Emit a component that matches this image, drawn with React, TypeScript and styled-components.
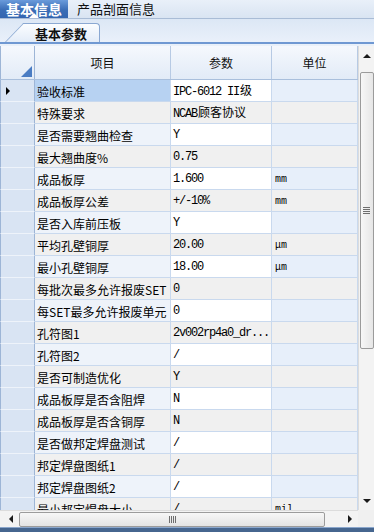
import React from "react";
import styled, { createGlobalStyle, css } from "styled-components";

const GlobalStyle = createGlobalStyle`
  html, body { margin: 0; padding: 0; background: #ffffff; }
  body { font-family: "Noto Sans CJK SC", "Liberation Sans", sans-serif; }
  * { box-sizing: border-box; }
`;

const CJK = `"Noto Sans CJK SC", "Noto Sans", sans-serif`;
const MONO = `"Liberation Mono", "Noto Sans CJK SC", monospace`;

const Frame = styled.div`
  width: 374px;
  height: 532px;
  overflow: hidden;
  display: flex;
  flex-direction: column;
  background: #e9f0f9;
  font-family: ${CJK};
`;

const TopBar = styled.div`
  height: 19px;
  flex: none;
  display: flex;
  align-items: stretch;
  background: linear-gradient(#e9f0f9, #d9e4f2);
  border-bottom: 1px solid #a9bcd6;
`;

const TopTab = styled.div<{ $active?: boolean }>`
  position: relative;
  display: flex;
  align-items: center;
  font-size: 14px;
  line-height: 18px;
  white-space: nowrap;
  ${(p) =>
    p.$active
      ? css`
          width: 68px;
          justify-content: center;
          color: #ffffff;
          font-weight: bold;
          background: linear-gradient(#6a9bdb, #3a6db6 55%, #3466b0);
          &::after {
            content: "";
            position: absolute;
            left: 29px;
            bottom: 0;
            border-left: 5px solid transparent;
            border-right: 5px solid transparent;
            border-bottom: 5px solid #ffffff;
          }
        `
      : css`
          padding-left: 9px;
          font-size: 13px;
          color: #111111;
        `}
`;

const SubBar = styled.div`
  height: 23px;
  flex: none;
  display: flex;
  align-items: flex-end;
  padding-left: 23px;
  background: linear-gradient(#dce7f5, #e9f0fa);
`;

const SubTab = styled.div`
  position: relative;
  z-index: 0;
  width: 77px;
  height: 19px;
  display: flex;
  align-items: center;
  justify-content: center;
  font-size: 13px;
  font-weight: bold;
  color: #111111;
  border-top: 1px solid #8aa8d2;
  border-right: 1px solid #8aa8d2;
  border-top-right-radius: 4px;
  background: linear-gradient(#fbfdff, #e3ecf8);
  &::before {
    content: "";
    position: absolute;
    z-index: -1;
    left: -18px;
    top: -1px;
    bottom: 0;
    width: 26px;
    border-left: 1px solid #8aa8d2;
    border-top: 1px solid #8aa8d2;
    background: linear-gradient(#fbfdff, #e3ecf8);
    transform: skewX(-44deg);
    transform-origin: bottom left;
  }
`;

const Rule = styled.div`
  height: 2px;
  flex: none;
  background: #6f98d2;
  margin-bottom: 2px;
`;

const GridMain = styled.div`
  display: flex;
  height: 464px;
  flex: none;
`;

const Viewport = styled.div`
  width: 358px;
  overflow: hidden;
  background: #ffffff;
`;

const COLS = "35px 136px 101px 86px";

const HeaderRow = styled.div`
  display: grid;
  grid-template-columns: ${COLS};
  height: 34px;
  background: linear-gradient(#f5f8fd, #e2ebf7);
  border-bottom: 1px solid #a9bfdc;
`;

const HeadCell = styled.div<{ $corner?: boolean }>`
  position: relative;
  display: flex;
  align-items: center;
  justify-content: center;
  font-size: 12px;
  color: #111111;
  border-right: 1px solid ${(p) => (p.$corner ? "#9db5d6" : "#b7cae4")};
  ${(p) =>
    p.$corner &&
    css`
      border-left: 1px solid #9db5d6;
      &::after {
        content: "";
        position: absolute;
        right: 2px;
        bottom: 2px;
        border-left: 11px solid transparent;
        border-bottom: 11px solid #4a7cc3;
      }
    `}
`;

const Row = styled.div`
  display: grid;
  grid-template-columns: ${COLS};
  height: 22px;
`;

const RowHead = styled.div<{ $current?: boolean }>`
  position: relative;
  background: #d9e4f3;
  border-left: 1px solid #9db5d6;
  border-right: 1px solid #9db5d6;
  border-bottom: 1px solid #eef3fa;
  ${(p) =>
    p.$current &&
    css`
      &::after {
        content: "";
        position: absolute;
        left: 5px;
        top: 7px;
        border-top: 4px solid transparent;
        border-bottom: 4px solid transparent;
        border-left: 4px solid #000000;
      }
    `}
`;

type Kind = "item" | "param" | "unit";

const bgFor = (kind: Kind, alt: boolean, selected: boolean) => {
  if (selected) return "#b7d2f2";
  if (alt) return "#f0f0f0";
  if (kind === "param") return "#ffffff";
  if (kind === "unit") return "#e7effa";
  return "#eef3fa";
};

const Cell = styled.div<{ $kind: Kind; $alt: boolean; $selected?: boolean }>`
  display: flex;
  align-items: center;
  padding: 1px 0 0 2px;
  overflow: hidden;
  white-space: nowrap;
  color: #000000;
  background: ${(p) => bgFor(p.$kind, p.$alt, !!p.$selected)};
  border-right: 1px solid #c9d9ee;
  border-bottom: 1px solid #c9d9ee;
  ${(p) =>
    p.$kind === "item"
      ? css`
          font-family: ${CJK};
          font-size: 12px;
        `
      : css`
          font-family: ${MONO};
          font-size: 12px;
          letter-spacing: -1.2px;
        `}
  ${(p) =>
    p.$kind === "unit" &&
    css`
      padding-left: 3px;
      font-size: 10px;
      letter-spacing: 0;
    `}
`;

const Value = styled.span`
  line-height: 16px;
`;

const Han = styled.span`
  font-family: ${CJK};
  font-size: 12px;
  letter-spacing: 0;
  margin-left: 1px;
`;

const VScroll = styled.div`
  width: 16px;
  display: flex;
  flex-direction: column;
  align-items: center;
  background: #f3f3f3;
  border-left: 1px solid #dcdcdc;
`;

const Arrow = styled.div<{ $dir: "up" | "down" | "left" | "right" }>`
  flex: none;
  width: 0;
  height: 0;
  ${(p) =>
    p.$dir === "up" &&
    css`
      margin: 8px 0 6px;
      border-left: 4px solid transparent;
      border-right: 4px solid transparent;
      border-bottom: 4px solid #1a1a1a;
    `}
  ${(p) =>
    p.$dir === "down" &&
    css`
      margin: auto 0 7px;
      border-left: 4px solid transparent;
      border-right: 4px solid transparent;
      border-top: 4px solid #1a1a1a;
    `}
  ${(p) =>
    p.$dir === "left" &&
    css`
      margin: 0 6px 0 9px;
      border-top: 4px solid transparent;
      border-bottom: 4px solid transparent;
      border-right: 4px solid #1a1a1a;
    `}
  ${(p) =>
    p.$dir === "right" &&
    css`
      margin: 0 6px 0 auto;
      border-top: 4px solid transparent;
      border-bottom: 4px solid transparent;
      border-left: 4px solid #1a1a1a;
    `}
`;

const VThumb = styled.div`
  width: 14px;
  height: 277px;
  margin-top: 8px;
  border: 1px solid #9b9b9b;
  border-radius: 2px;
  background: linear-gradient(90deg, #f7f7f7, #e6e6e6);
  display: flex;
  align-items: center;
  justify-content: center;
`;

const VGrip = styled.div`
  width: 7px;
  height: 7px;
  background: repeating-linear-gradient(#6e6e6e 0 1px, transparent 1px 2px);
`;

const HBar = styled.div`
  height: 17px;
  flex: none;
  display: flex;
`;

const HScroll = styled.div`
  width: 358px;
  display: flex;
  align-items: center;
  background: #f3f3f3;
  border-top: 1px solid #dcdcdc;
`;

const HThumb = styled.div`
  width: 306px;
  height: 15px;
  border: 1px solid #9b9b9b;
  border-radius: 2px;
  background: linear-gradient(#f7f7f7, #e3e3e3);
  display: flex;
  align-items: center;
  justify-content: center;
`;

const HGrip = styled.div`
  width: 7px;
  height: 7px;
  background: repeating-linear-gradient(90deg, #6e6e6e 0 1px, transparent 1px 2px);
`;

const Corner = styled.div`
  flex: 1;
  background: #f0f0f0;
`;

const BottomBar = styled.div`
  flex: 1;
  background: #46668f;
  border-top: 1px solid #8aa6cc;
`;

type Rec = [string, string, string];

const rows: Rec[] = [
  ["验收标准", "IPC-6012 II级", ""],
  ["特殊要求", "NCAB顾客协议", ""],
  ["是否需要翘曲检查", "Y", ""],
  ["最大翘曲度%", "0.75", ""],
  ["成品板厚", "1.600", "mm"],
  ["成品板厚公差", "+/-10%", "mm"],
  ["是否入库前压板", "Y", ""],
  ["平均孔壁铜厚", "20.00", "μm"],
  ["最小孔壁铜厚", "18.00", "μm"],
  ["每批次最多允许报废SET", "0", ""],
  ["每SET最多允许报废单元", "0", ""],
  ["孔符图1", "2v002rp4a0_dr...", ""],
  ["孔符图2", "/", ""],
  ["是否可制造优化", "Y", ""],
  ["成品板厚是否含阻焊", "N", ""],
  ["成品板厚是否含铜厚", "N", ""],
  ["是否做邦定焊盘测试", "/", ""],
  ["邦定焊盘图纸1", "/", ""],
  ["邦定焊盘图纸2", "/", ""],
  ["最小邦定焊盘大小", "/", "mil"],
];

// Split a value into runs so CJK characters keep their full width
function MixedText({ text }: { text: string }) {
  const parts = text.split(/([\u4e00-\u9fff]+)/).filter(Boolean);
  return (
    <Value>
      {parts.map((part, i) =>
        /[\u4e00-\u9fff]/.test(part) ? <Han key={i}>{part}</Han> : <React.Fragment key={i}>{part}</React.Fragment>
      )}
    </Value>
  );
}

export default function App() {
  return (
    <>
      <GlobalStyle />
      <Frame>
        <TopBar>
          <TopTab $active>基本信息</TopTab>
          <TopTab>产品剖面信息</TopTab>
        </TopBar>
        <SubBar>
          <SubTab>基本参数</SubTab>
        </SubBar>
        <Rule />
        <GridMain>
          <Viewport>
            <HeaderRow>
              <HeadCell $corner />
              <HeadCell>项目</HeadCell>
              <HeadCell>参数</HeadCell>
              <HeadCell>单位</HeadCell>
            </HeaderRow>
            {rows.map(([item, param, unit], i) => {
              const alt = i % 2 === 1;
              return (
                <Row key={i}>
                  <RowHead $current={i === 0} />
                  <Cell $kind="item" $alt={alt} $selected={i === 0}>
                    {item}
                  </Cell>
                  <Cell $kind="param" $alt={alt}>
                    <MixedText text={param} />
                  </Cell>
                  <Cell $kind="unit" $alt={alt}>
                    {unit}
                  </Cell>
                </Row>
              );
            })}
          </Viewport>
          <VScroll>
            <Arrow $dir="up" />
            <VThumb>
              <VGrip />
            </VThumb>
            <Arrow $dir="down" />
          </VScroll>
        </GridMain>
        <HBar>
          <HScroll>
            <Arrow $dir="left" />
            <HThumb>
              <HGrip />
            </HThumb>
            <Arrow $dir="right" />
          </HScroll>
          <Corner />
        </HBar>
        <BottomBar />
      </Frame>
    </>
  );
}
